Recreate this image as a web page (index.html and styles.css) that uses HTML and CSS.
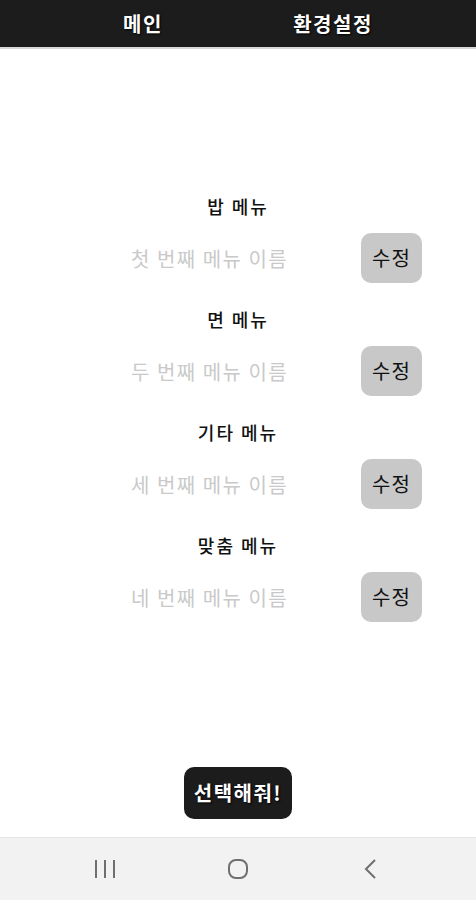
FILE: index.html
```html
<!DOCTYPE html>
<html>
<head>
  <meta charset="utf-8">
  <link rel="stylesheet" href="styles.css">
</head>
<body>
  <div class="app">
    <div class="top-bar">
      <div class="top-tab">메인</div>
      <div class="top-tab">환경설정</div>
    </div>

    <div class="menu-list">
      <div class="menu-section">
        <p class="menu-title">밥 메뉴</p>
        <div class="menu-row">
          <span class="menu-hint">첫 번째 메뉴 이름</span>
          <div class="edit-button">수정</div>
        </div>
      </div>
      <div class="menu-section">
        <p class="menu-title">면 메뉴</p>
        <div class="menu-row">
          <span class="menu-hint">두 번째 메뉴 이름</span>
          <div class="edit-button">수정</div>
        </div>
      </div>
      <div class="menu-section">
        <p class="menu-title">기타 메뉴</p>
        <div class="menu-row">
          <span class="menu-hint">세 번째 메뉴 이름</span>
          <div class="edit-button">수정</div>
        </div>
      </div>
      <div class="menu-section">
        <p class="menu-title">맞춤 메뉴</p>
        <div class="menu-row">
          <span class="menu-hint">네 번째 메뉴 이름</span>
          <div class="edit-button">수정</div>
        </div>
      </div>
    </div>

    <div class="pick-wrap">
      <div class="pick-button">선택해줘!</div>
    </div>

    <div class="nav-bar">
      <div class="nav-item">
        <svg width="22" height="22" viewBox="0 0 22 22">
          <path d="M2 2v18M11 2v18M20 2v18" stroke="#6f6f6f" stroke-width="2" fill="none"/>
        </svg>
      </div>
      <div class="nav-item">
        <svg width="22" height="22" viewBox="0 0 22 22">
          <rect x="2" y="2" width="18" height="18" rx="7" stroke="#6f6f6f" stroke-width="2" fill="none"/>
        </svg>
      </div>
      <div class="nav-item">
        <svg width="22" height="22" viewBox="0 0 22 22">
          <path d="M15 2l-9 9 9 9" stroke="#6f6f6f" stroke-width="2" fill="none"/>
        </svg>
      </div>
    </div>
  </div>
</body>
</html>
```

FILE: styles.css
```css
body {
  margin: 0;
  background-color: #fff;
  font-family: "Noto Sans CJK KR", "Noto Sans", sans-serif;
}

.app {
  display: flex;
  flex-direction: column;
  width: 476px;
  height: 900px;
}

.top-bar {
  display: flex;
  justify-content: center;
  align-items: center;
  height: 49px;
  background-color: #1c1c1c;
  border-bottom: 2px solid #d8d8d8;
  box-sizing: border-box;
}

.top-tab {
  width: 190px;
  text-align: center;
  color: #fff;
  font-size: 20px;
  font-weight: bold;
  letter-spacing: 1.5px;
  text-shadow: 1px 1px 2px #000;
}

.menu-list {
  flex: 1;
  padding-top: 144px;
}

.menu-section {
  margin-bottom: 23px;
}

.menu-title {
  margin: 0 0 14px 0;
  height: 26px;
  line-height: 26px;
  text-align: center;
  font-size: 18px;
  font-weight: 500;
  letter-spacing: 2px;
  color: #111;
}

.menu-row {
  display: flex;
  justify-content: space-between;
  align-items: center;
  padding: 0 54px 0 131px;
}

.menu-hint {
  font-size: 20px;
  letter-spacing: 1.5px;
  color: #c9c9c9;
}

.edit-button {
  width: 61px;
  height: 50px;
  line-height: 50px;
  text-align: center;
  background-color: #c8c8c8;
  border-radius: 10px;
  font-size: 20px;
  letter-spacing: 1px;
  color: #111;
}

.pick-wrap {
  display: flex;
  justify-content: center;
  margin-bottom: 18px;
}

.pick-button {
  width: 108px;
  height: 52px;
  line-height: 52px;
  text-align: center;
  background-color: #1c1c1c;
  border-radius: 10px;
  color: #fff;
  font-size: 20px;
  font-weight: bold;
  letter-spacing: 1.5px;
  text-shadow: 1px 1px 2px #000;
}

.nav-bar {
  display: flex;
  justify-content: center;
  align-items: center;
  height: 63px;
  background-color: #f2f2f2;
  border-top: 1px solid #e4e4e4;
  box-sizing: border-box;
}

.nav-item {
  width: 133px;
  display: flex;
  justify-content: center;
}
```
